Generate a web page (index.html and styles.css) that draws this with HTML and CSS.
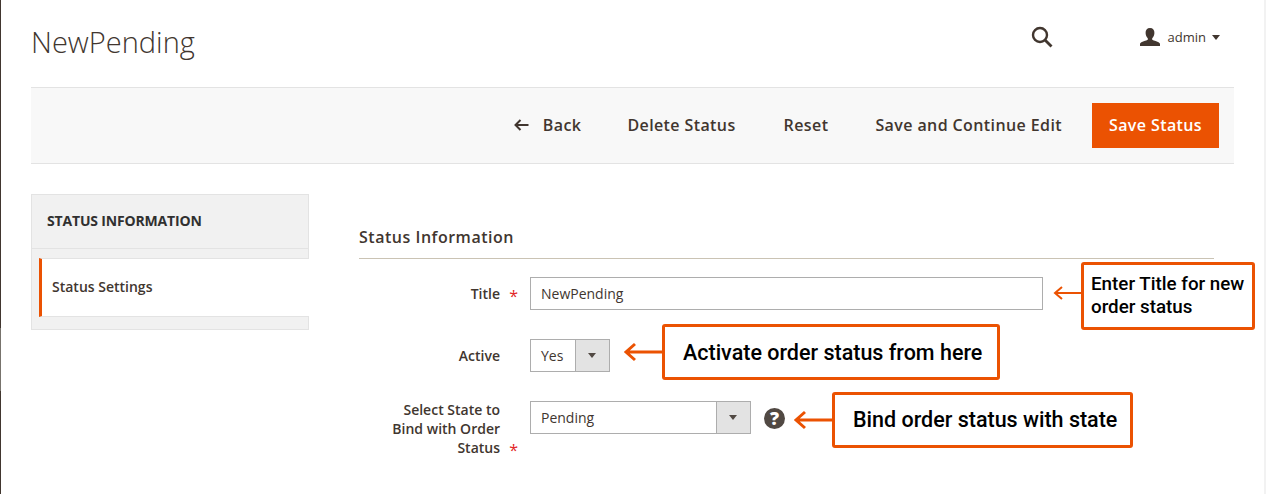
FILE: index.html
```html
<!DOCTYPE html>
<html lang="en">
<head>
<meta charset="utf-8">
<title>NewPending</title>
<link rel="stylesheet" href="styles.css">
</head>
<body>
<div class="page">
  <header class="page-header">
    <h1 class="page-title">NewPending</h1>
    <div class="header-tools">
      <svg class="search-icon" viewBox="0 0 22 22" width="22" height="22" aria-hidden="true"><circle cx="9" cy="9" r="7" fill="none" stroke="#41362f" stroke-width="2.4"/><path d="M14 14l6.5 6.5" fill="none" stroke="#41362f" stroke-width="2.8"/></svg>
      <div class="user">
        <svg class="user-icon" viewBox="0 0 20 18" width="20" height="18" aria-hidden="true"><path d="M10 0c3 0 4.6 2 4.4 5 0 2-1 4-2.2 5.2v1.6c1 .9 7 1.9 7.8 4V18H0v-2.200c.8-2.100 6.800-3.100 7.800-4v-1.600C6.600 9 5.600 7 5.600 5 5.400 2 7 0 10 0z" fill="#41362f"/></svg>
        <span class="user-name">admin</span>
        <span class="caret"></span>
      </div>
    </div>
  </header>

  <div class="actions">
    <a class="action action-back"><svg viewBox="0 0 15 12" width="15" height="12" aria-hidden="true"><path d="M14.500 6H1.500M6.500 1l-5 5 5 5" fill="none" stroke="#41362f" stroke-width="2"/></svg><span>Back</span></a>
    <a class="action action-delete">Delete Status</a>
    <a class="action">Reset</a>
    <a class="action">Save and Continue Edit</a>
    <button class="save-btn" type="button">Save Status</button>
  </div>

  <div class="content">
    <aside class="sidebar">
      <div class="side-title">STATUS INFORMATION</div>
      <div class="side-body">
        <div class="side-item">Status Settings</div>
      </div>
    </aside>
    <main class="main">
      <h2 class="section-title">Status Information</h2>
      <div class="form">
        <div class="label req">Title</div>
        <div class="control"><div class="input">NewPending</div></div>
        <div class="label">Active</div>
        <div class="control"><div class="select select-short"><span>Yes</span><i class="select-btn"></i></div></div>
        <div class="label req label-multi">Select State to<br>Bind with Order<br>Status</div>
        <div class="control control-help">
          <div class="select select-mid"><span>Pending</span><i class="select-btn"></i></div>
          <span class="help">?</span>
        </div>
      </div>
    </main>
  </div>
</div>

<div class="callout callout-title">Enter Title for new order status</div>
<div class="callout callout-active">Activate order status from here</div>
<div class="callout callout-state">Bind order status with state</div>
<svg class="arrow arrow-title" viewBox="0 0 30 16" width="30" height="16" aria-hidden="true"><path d="M30 8H2M9 2L2 8l7 6" fill="none" stroke="#eb5202" stroke-width="2"/></svg>
<svg class="arrow arrow-active" viewBox="0 0 40 20" width="40" height="20" aria-hidden="true"><path d="M40 10H3M12 2L3 10l9 8" fill="none" stroke="#eb5202" stroke-width="3"/></svg>
<svg class="arrow arrow-state" viewBox="0 0 40 20" width="40" height="20" aria-hidden="true"><path d="M40 10H3M12 2L3 10l9 8" fill="none" stroke="#eb5202" stroke-width="3"/></svg>
<div class="edge-left"></div>
<div class="edge-right"></div>
</body>
</html>
```
FILE: styles.css
```css
* { box-sizing: border-box; }
html, body { margin: 0; padding: 0; }
body {
  width: 1266px;
  height: 494px;
  overflow: hidden;
  background: #fff;
  color: #41362f;
  font-family: "Open Sans", sans-serif;
  position: relative;
}
.page { padding: 0 32px 0 31px; }

.page-header {
  height: 87px;
  display: flex;
  align-items: flex-start;
  justify-content: space-between;
}
.page-title {
  margin: 21px 0 0;
  font-size: 29px;
  line-height: 42px;
  font-weight: 300;
  color: #41362f;
}
.header-tools {
  display: flex;
  align-items: center;
  margin-top: 26px;
  margin-right: 14px;
}
.search-icon { display: block; }
.user {
  display: flex;
  align-items: center;
  margin-left: 87px;
  height: 20px;
}
.user-name { font-size: 13px; margin-left: 8px; line-height: 18px; }
.caret {
  margin-left: 6px;
  border-style: solid;
  border-width: 5px 4px 0;
  border-color: #41362f transparent transparent;
}

.actions {
  height: 77px;
  background: #f8f8f8;
  border-top: 1px solid #e3e3e3;
  border-bottom: 1px solid #e3e3e3;
  display: flex;
  align-items: center;
  justify-content: flex-end;
  padding-right: 15px;
}
.action {
  font-size: 16px;
  font-weight: 600;
  letter-spacing: .4px;
  color: #41362f;
  margin-right: 30px;
  margin-left: 17px;
  padding-bottom: 2px;
  display: flex;
  align-items: center;
  line-height: 22px;
}
.action-back { margin-right: 29px; }
.action-delete { margin-right: 31px; }
.action-back svg { margin-right: 14px; }
.save-btn {
  width: 127px;
  height: 45px;
  border: 0;
  padding: 0 0 2px;
  background: #eb5202;
  color: #fff;
  font: 600 16px "Open Sans", sans-serif;
  letter-spacing: .4px;
}

.content { display: flex; margin-top: 30px; }
.sidebar { width: 278px; flex: none; }
.side-title {
  height: 55px;
  background: #f1f1f1;
  border: 1px solid #e3e3e3;
  border-bottom: 1px solid #e3e3e3;
  padding-left: 15px;
  font-size: 14px;
  font-weight: 700;
  letter-spacing: -.17px;
  line-height: 52px;
  color: #303030;
}
.side-body {
  background: #f1f1f1;
  border: 1px solid #e3e3e3;
  border-top: 0;
  padding: 9px 0 13px 7px;
  height: 81px;
}
.side-item {
  height: 59px;
  margin-right: -1px;
  background: #fff;
  border-left: 3px solid #eb5202;
  border-top: 1px solid #e3e3e3;
  border-bottom: 1px solid #e3e3e3;
  padding-left: 10px;
  font-size: 14px;
  font-weight: 600;
  line-height: 56px;
  color: #41362f;
}

.main { margin-left: 50px; width: 855px; }
.section-title {
  margin: 0;
  height: 65px;
  padding-top: 31px;
  border-bottom: 1px solid #cac3b4;
  font-size: 16px;
  line-height: 24px;
  font-weight: 600;
  letter-spacing: .52px;
  color: #41362f;
}
.form {
  display: grid;
  grid-template-columns: 141px 1fr;
  column-gap: 30px;
  row-gap: 29px;
  margin-top: 18px;
}
.label {
  text-align: right;
  align-self: start;
  font-size: 14px;
  font-weight: 600;
  line-height: 19px;
  padding-top: 7px;
  position: relative;
  color: #41362f;
}
.label-multi { padding-top: 0; margin-top: -1px; }
.label-multi::after { bottom: -3px; }
.req::after {
  content: "*";
  position: absolute;
  right: -18px;
  bottom: -4px;
  color: #e22626;
  font-size: 16px;
  line-height: 22px;
  font-weight: 400;
}
.control { display: flex; align-items: flex-start; }
.input, .select {
  height: 33px;
  background: #fff;
  border: 1px solid #adadad;
  font-size: 14px;
  line-height: 31px;
  padding-left: 10px;
  color: #41362f;
}
.input { width: 513px; }
.select { display: flex; justify-content: space-between; position: relative; }
.select-short { width: 80px; }
.select-mid { width: 221px; }
.select-btn {
  display: block;
  width: 34px;
  margin: 0;
  background: #e3e3e3;
  border-left: 1px solid #adadad;
  position: relative;
}
.select-btn::after {
  content: "";
  position: absolute;
  left: 12px;
  top: 13px;
  border-style: solid;
  border-width: 5px 4px 0;
  border-color: #514943 transparent transparent;
}
.help {
  width: 21px;
  height: 21px;
  margin: 7px 0 0 13px;
  border-radius: 50%;
  background: #514943;
  color: #fff;
  font-size: 18px;
  font-weight: 800;
  line-height: 21px;
  text-align: center;
}

.callout {
  position: absolute;
  background: #fff;
  border: 3px solid #eb5202;
  border-radius: 3px;
  color: #000;
  font-family: Roboto, sans-serif;
  font-weight: 500;
  display: flex;
  align-items: center;
}
.callout-title {
  left: 1081px; top: 262px; width: 174px; height: 68px;
  font-size: 18.800px; line-height: 23px; padding-left: 7px;
}
.callout-active {
  left: 662px; top: 324px; width: 338px; height: 56px;
  font-size: 21.500px; padding-left: 18px;
}
.callout-state {
  left: 832px; top: 392px; width: 301px; height: 56px;
  font-size: 21.500px; padding: 0 0 2px 18px;
}
.arrow { position: absolute; display: block; }
.arrow-title { left: 1053px; top: 285px; }
.arrow-active { left: 623px; top: 342px; }
.arrow-state { left: 793px; top: 410px; }
.edge-left {
  position: absolute;
  left: 0;
  top: 0;
  width: 1px;
  height: 494px;
  background: linear-gradient(#41362f 0 328px, #77736c 328px 391px, #41362f 391px);
}
.edge-right { position: absolute; right: 0; top: 0; width: 2px; height: 494px; background: #f2f2f2; }
```
